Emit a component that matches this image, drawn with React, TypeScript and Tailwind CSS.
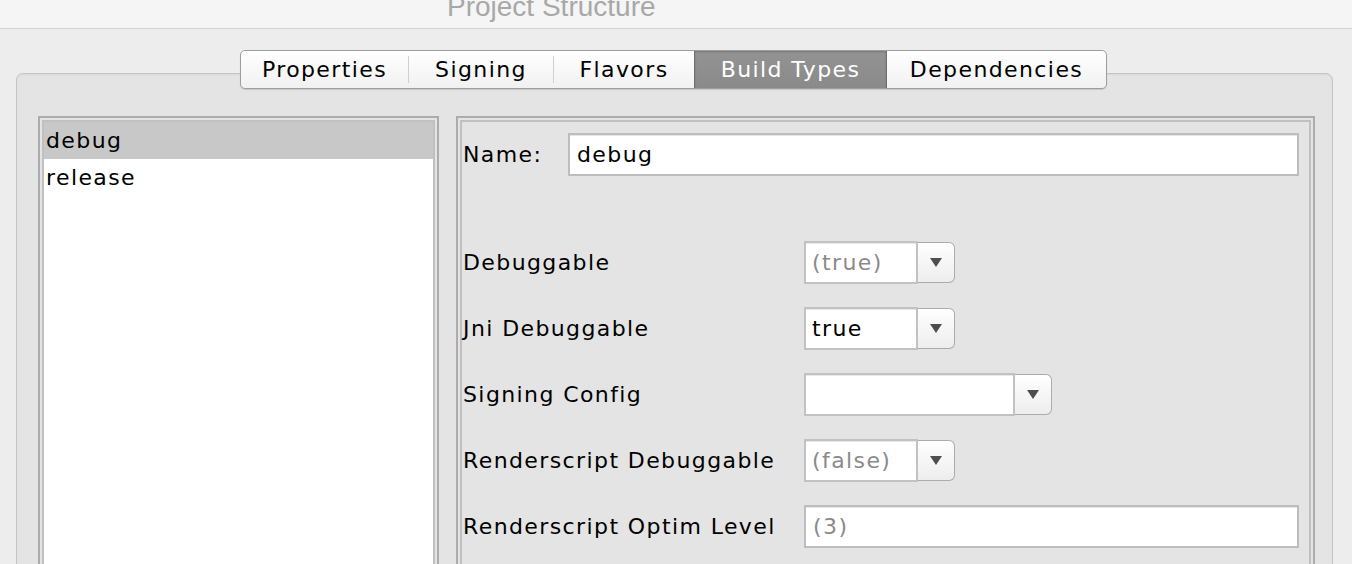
import React from 'react';

const tabs = [
  { label: 'Properties', width: 'w-[167px]' },
  { label: 'Signing', width: 'w-[144px]' },
  { label: 'Flavors', width: 'w-[140px]' },
  { label: 'Build Types', width: 'w-[193px]', selected: true },
  { label: 'Dependencies', width: 'w-[219px]' },
];

function Arrow() {
  return (
    <svg width="12" height="9" viewBox="0 0 12 9" className="block">
      <polygon points="0,0 12,0 6,9" fill="#4e4e4e" />
    </svg>
  );
}

function Dropdown({ value, dim, width }: { value: string; dim?: boolean; width: string }) {
  return (
    <div className="flex h-[43px]">
      <div
        className={`${width} h-full bg-white border-2 border-[#c2c2c2] shadow-[inset_0_1px_0_#e8e8e8] flex items-center pl-[6px] ${
          dim ? 'text-[#8a8a8a]' : 'text-black'
        }`}
      >
        {value}
      </div>
      <div className="w-[37px] my-[1px] flex items-center justify-center rounded-r-[6px] border border-l-0 border-[#ababab] bg-gradient-to-b from-[#ffffff] to-[#ededed]">
        <Arrow />
      </div>
    </div>
  );
}

function TextField({ value, dim }: { value: string; dim?: boolean }) {
  return (
    <div
      className={`flex-1 h-[43px] bg-white border-2 border-[#bdbdbd] shadow-[inset_0_1px_0_#e6e6e6] flex items-center pl-[7px] ${
        dim ? 'text-[#8a8a8a]' : 'text-black'
      }`}
    >
      {value}
    </div>
  );
}

function Boxed({ className, children }: { className?: string; children?: React.ReactNode }) {
  return (
    <div className={`border-2 border-[#acacac] p-[2px] ${className ?? ''}`}>
      <div className="h-full border-2 border-[#c0c0c0]">{children}</div>
    </div>
  );
}

const rows: { label: string; control: React.ReactNode }[] = [
  { label: 'Debuggable', control: <Dropdown value="(true)" dim width="w-[114px]" /> },
  { label: 'Jni Debuggable', control: <Dropdown value="true" width="w-[114px]" /> },
  { label: 'Signing Config', control: <Dropdown value="" width="w-[211px]" /> },
  { label: 'Renderscript Debuggable', control: <Dropdown value="(false)" dim width="w-[114px]" /> },
  { label: 'Renderscript Optim Level', control: <TextField value="(3)" dim /> },
];

export default function App() {
  return (
    <div
      className="w-[1352px] h-[564px] overflow-hidden bg-[#ededed] text-[22px] tracking-[1.4px] text-black"
      style={{ fontFamily: '"DejaVu Sans", Verdana, sans-serif' }}
    >
      <div className="h-[29px] bg-[#f5f5f5] border-b border-[#d3d3d3] overflow-hidden pl-[447px]">
        <div
          className="text-[28px] leading-[28px] mt-[-7px] tracking-normal text-[#a8a8a8]"
          style={{ fontFamily: '"Liberation Sans", Arial, sans-serif' }}
        >
          Project Structure
        </div>
      </div>

      <div className="pt-[21px]">
        <div className="relative z-10 flex justify-center pr-[5px]">
          <div className="flex h-[39px] rounded-[5px] border border-[#9d9d9d] overflow-hidden shadow-[0_1px_1px_rgba(0,0,0,0.12)] bg-gradient-to-b from-[#ffffff] to-[#f1f1f1]">
            {tabs.map((t, i) => {
              const next = tabs[i + 1];
              const sep = next && !t.selected && !next.selected;
              return (
                <React.Fragment key={t.label}>
                  <div
                    className={`${t.width} h-full flex items-center justify-center ${
                      t.selected
                        ? 'bg-gradient-to-b from-[#939393] to-[#8a8a8a] text-white border-x border-[#6e6e6e] shadow-[inset_0_1px_2px_rgba(0,0,0,0.2)]'
                        : ''
                    }`}
                  >
                    {t.label}
                  </div>
                  {sep && <div className="w-px my-[5px] bg-[#cfcfcf]" />}
                </React.Fragment>
              );
            })}
          </div>
        </div>

        <div className="ml-[16px] mr-[19px] -mt-[16px] h-[530px] rounded-[7px] border border-[#c5c5c5] bg-[#e4e4e4] shadow-[inset_0_1px_2px_rgba(0,0,0,0.05)] pt-[42px] pl-[21px] pr-[17px] flex gap-[17px]">
          <Boxed className="w-[401px] h-[500px]">
            <div className="h-full bg-white">
              <div className="h-[37px] leading-[37px] bg-[#c8c8c8] pl-[2px]">debug</div>
              <div className="h-[37px] leading-[37px] pl-[2px]">release</div>
            </div>
          </Boxed>

          <Boxed className="flex-1 h-[500px]">
            <div className="pt-[11px] pl-[1px] pr-[10px]">
              <div className="flex items-center h-[43px]">
                <div className="w-[105px]">Name:</div>
                <TextField value="debug" />
              </div>

              <div className="mt-[65px] flex flex-col gap-[23px]">
                {rows.map((r) => (
                  <div key={r.label} className="flex items-center h-[43px]">
                    <div className="w-[341px] shrink-0">{r.label}</div>
                    {r.control}
                  </div>
                ))}
              </div>
            </div>
          </Boxed>
        </div>
      </div>
    </div>
  );
}
